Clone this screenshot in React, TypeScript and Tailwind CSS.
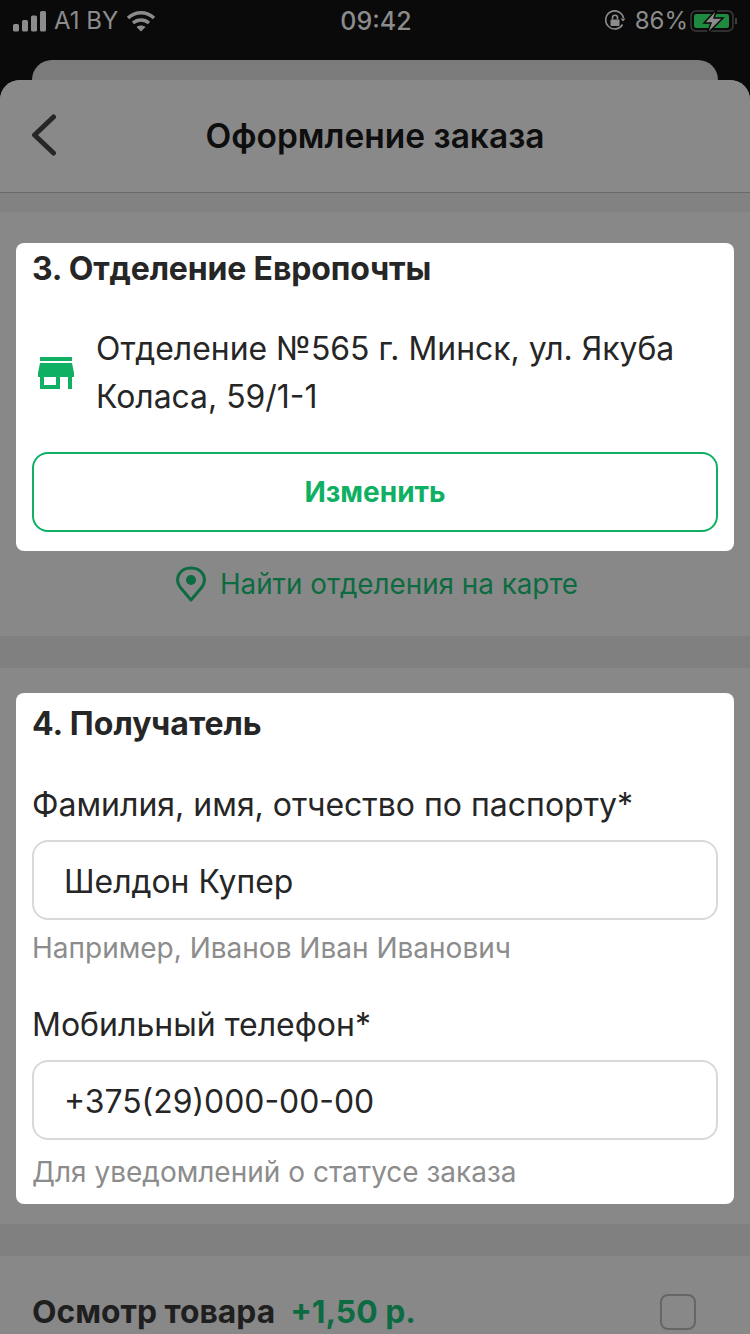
import React from 'react';

const StatusBar: React.FC = () => (
  <div className="h-[60px] flex items-start justify-between px-[12px] pt-[8px] text-[#8c8c8c]">
    <div className="flex items-center gap-[8px] h-[26px] w-[200px]">
      <svg width="34" height="22" viewBox="0 0 34 22" fill="#8c8c8c">
        <rect x="1" y="14" width="6" height="7.5" rx="1.5" />
        <rect x="10" y="10" width="6" height="11.5" rx="1.5" />
        <rect x="19" y="5.5" width="6" height="16" rx="1.5" />
        <rect x="28" y="1" width="6" height="20.5" rx="1.5" />
      </svg>
      <span className="text-[24px] leading-[26px]">A1 BY</span>
      <svg width="30" height="22" viewBox="0 0 30 22" fill="none" stroke="#8c8c8c" strokeWidth="3.4">
        <path d="M2 8 C9.5 1 20.5 1 28 8" />
        <path d="M7 13 C11.5 9 18.5 9 23 13" />
        <path d="M15 21.5 L10.5 17 C13 15 17 15 19.5 17 Z" fill="#8c8c8c" stroke="none" />
      </svg>
    </div>
    <span className="pl-[2px] text-[25px] leading-[26px] font-medium">09:42</span>
    <div className="flex items-center justify-end w-[200px] h-[26px]">
      <svg width="22" height="22" viewBox="0 0 22 22" fill="none" stroke="#8c8c8c" strokeWidth="1.6" className="mr-[9px]">
        <path d="M18.5 14.5 A9 9 0 1 1 19.5 8" />
        <path d="M16.5 8.5 L21.5 8.5 L19 11.5 Z" fill="#8c8c8c" stroke="none" />
        <rect x="6.5" y="9.5" width="9" height="6.5" rx="1" fill="#8c8c8c" stroke="none" />
        <path d="M8.5 9.5 V7.8 A2.5 2.5 0 0 1 13.5 7.8 V9.5" />
      </svg>
      <span className="text-[24px] leading-[26px]">86%</span>
      <svg width="48" height="26" viewBox="0 0 48 26" fill="none" className="ml-[2px]">
        <rect x="1" y="3" width="42" height="20" rx="5" stroke="#3b3b3b" strokeWidth="1.5" />
        <rect x="4" y="6" width="35" height="14" rx="2.5" fill="#1f8a3f" />
        <path d="M46 10 V16" stroke="#3b3b3b" strokeWidth="2" />
        <path d="M27 1 L14 15 H21 L17 26 L33 10 H24 Z" fill="#8c8c8c" stroke="#0a0a0a" strokeWidth="1.5" />
      </svg>
    </div>
  </div>
);

const Header: React.FC = () => (
  <div className="h-[113px] rounded-t-[20px] bg-[#898989] border-b border-[#6a6a6a] flex items-center relative">
    <svg className="ml-[30px]" width="28" height="44" viewBox="0 0 28 44" fill="none" stroke="#262626" strokeWidth="5" strokeLinecap="round" strokeLinejoin="round">
      <path d="M23.5 3 L4.5 21 L23.5 39" />
    </svg>
    <h1 className="absolute inset-x-0 text-center text-[33.5px] font-semibold text-[#0e0e0e]">Оформление заказа</h1>
  </div>
);

const Field: React.FC<{ label: string; value: string; hint: string; hintClass: string }> = ({ label, value, hint, hintClass }) => (
  <div>
    <div className="text-[32px] leading-[36px] text-[#262626]">{label}</div>
    <div className="mt-[17px] h-[80px] rounded-[16px] border-2 border-[#d9d9d9] flex items-center pl-[30px] pt-[3px] text-[31.9px] text-[#262626]">
      {value}
    </div>
    <div className={`${hintClass} text-[28px] leading-[34px] text-[#8c8c8c]`}>{hint}</div>
  </div>
);

const App: React.FC = () => (
  <div className="font-[Inter,sans-serif] w-[750px] h-[1334px] overflow-hidden bg-[#0a0a0a]">
    <StatusBar />
    <div className="mx-[32px] h-[20px] rounded-t-[20px] bg-[#7b7b7b]" />
    <div className="bg-[#888888] rounded-t-[20px] h-[1254px]">
      <Header />
      <div className="h-[19px] bg-[#828282]" />

      <section className="h-[424px] pt-[31px] px-[16px]">
        <div className="bg-white rounded-[8px] h-[308px] px-[16px]">
          <h2 className="text-[32px] leading-[52px] tracking-[-0.15px] font-bold text-[#262626]">3. Отделение Европочты</h2>
          <div className="mt-[30px] flex items-center">
            <svg className="shrink-0" width="48" height="48" viewBox="0 0 24 24" fill="#0fb063">
              <path d="M20 4H4v2h16V4zm1 10v-2l-1-5H4l-1 5v2h1v6h10v-6h4v6h2v-6h1zm-9 4H6v-4h6v4z" />
            </svg>
            <p className="ml-[16px] text-[31.9px] leading-[48px] text-[#262626]">Отделение №565 г. Минск, ул. Якуба Коласа, 59/1-1</p>
          </div>
          <button className="mt-[31px] w-full h-[80px] rounded-[16px] border-2 border-[#0fb063] text-[28px] font-bold text-[#0fb063]">
            Изменить
          </button>
        </div>
        <div className="mt-[15px] pl-[3px] flex items-center justify-center gap-[13px] text-[27.8px] leading-[36px] text-[#0d6b41]">
          <svg width="32" height="36" viewBox="0 0 32 36" fill="none" stroke="#0d6b41" strokeWidth="3">
            <path d="M16 34 L5 21 C-1 12 5 2 16 2 C27 2 33 12 27 21 Z" strokeLinejoin="round" />
            <circle cx="16" cy="14" r="5" fill="#0d6b41" stroke="none" />
          </svg>
          <span>Найти отделения на карте</span>
        </div>
      </section>

      <div className="h-[32px] bg-[#808080]" />

      <section className="h-[556px] pt-[25px] px-[16px]">
        <div className="bg-white rounded-[8px] h-[511px] px-[16px]">
          <h2 className="text-[32px] leading-[62px] font-bold text-[#262626]">4. Получатель</h2>
          <div className="mt-[32px] flex flex-col gap-[42px]">
            <Field label="Фамилия, имя, отчество по паспорту*" value="Шелдон Купер" hint="Например, Иванов Иван Иванович" hintClass="mt-[11px]" />
            <Field label="Мобильный телефон*" value="+375(29)000-00-00" hint="Для уведомлений о статусе заказа" hintClass="mt-[15px]" />
          </div>
        </div>
      </section>

      <div className="h-[32px] bg-[#808080]" />

      <div className="flex items-center justify-between pl-[32px] pr-[54px] pt-[32px]">
        <div className="flex items-center gap-[15px] text-[31.8px] font-bold">
          <span className="text-[#1f1f1f]">Осмотр товара</span>
          <span className="text-[#0d6b41]">+1,50 р.</span>
        </div>
        <div className="w-[36px] h-[36px] rounded-[8px] border-2 border-[#666666]" />
      </div>
    </div>
  </div>
);

export default App;
